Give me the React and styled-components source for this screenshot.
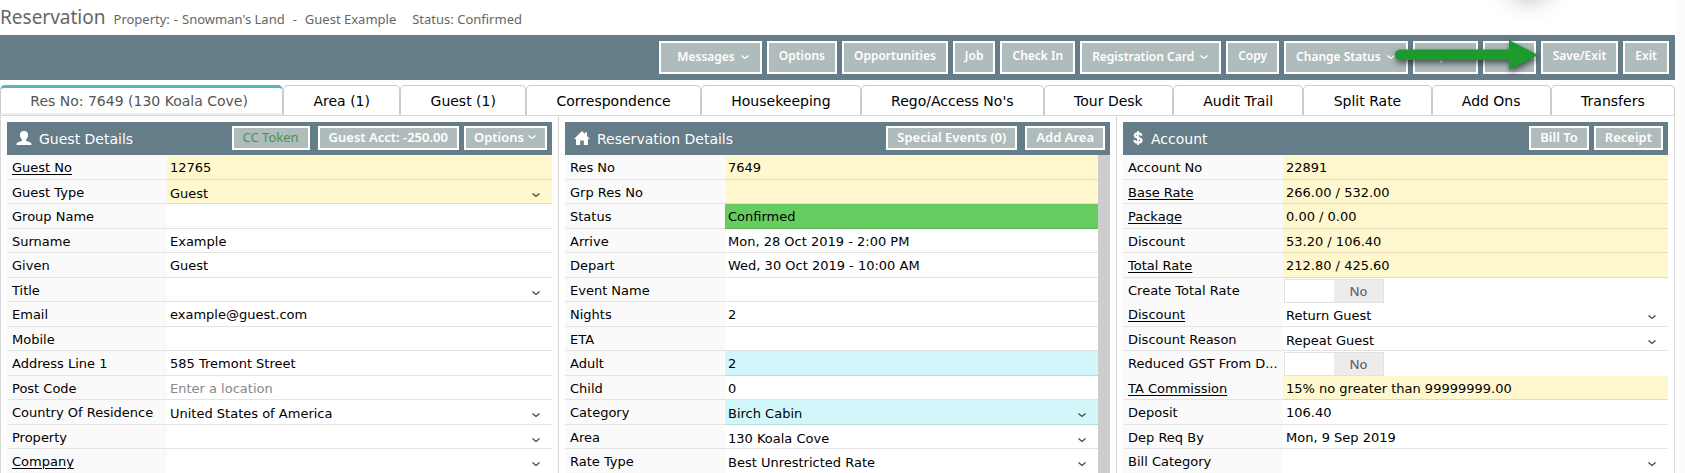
import React from 'react';
import styled, { createGlobalStyle, css } from 'styled-components';

const GlobalStyle = createGlobalStyle`
  * {
    box-sizing: border-box;
  }

  body {
    margin: 0;
    background: #fff;
    color: #000;
    font-family: 'DejaVu Sans', Verdana, sans-serif;
    font-size: 13px;
    overflow: hidden;
  }

  button,
  input,
  select {
    font: inherit;
    color: inherit;
  }
`;

const Page = styled.div`
  position: relative;
  padding-right: 10px;
  background: linear-gradient(to left, #fcfcfc 10px, #fff 10px);
`;

const TitleBar = styled.header`
  display: flex;
  align-items: baseline;
  height: 35px;
  padding-top: 5px;
  overflow: hidden;
  color: #666;
  font-family: 'Noto Sans', Tahoma, sans-serif;
  font-size: 13px;
  line-height: 24px;
`;

const Title = styled.h1`
  margin: 0 8px 0 0;
  font-size: 19px;
  font-weight: 400;
  line-height: 24px;
`;

const Crumb = styled.span`
  margin-right: ${props => props.$gap || 4}px;
`;

const Bubble = styled.div`
  position: absolute;
  top: -48px;
  right: 134px;
  width: 44px;
  height: 44px;
  border-radius: 50%;
  box-shadow: 0 4px 24px rgba(0, 0, 0, 0.3);
`;

const Toolbar = styled.nav`
  position: relative;
  display: flex;
  justify-content: flex-end;
  gap: 5px;
  height: 45px;
  padding: 6px 6px 6px 0;
  background: #657c89;
`;

const Button = styled.button`
  display: flex;
  align-items: center;
  justify-content: center;
  gap: 5px;
  height: 33px;
  padding: 0 10px ${props => (props.$menu ? 2 : 4)}px ${props => (props.$wide ? 16 : 10)}px;
  border: 2px solid #fff;
  background: #b0bcbc;
  color: #fff;
  font-family: 'Noto Sans', Tahoma, sans-serif;
  font-size: 12px;
  font-weight: 600;
  line-height: 18px;
  white-space: nowrap;
`;

const SmallButton = styled(Button)`
  gap: 3px;
  height: 24px;
  margin-right: ${props => (props.$apart ? 3 : 0)}px;
  padding: 0 ${props => (props.$menu ? 8 : 9)}px 2px;
  color: ${props => (props.$green ? '#4b9346' : '#fff')};
  font-size: 13px;
  font-weight: ${props => (props.$green ? 400 : 600)};
`;

const Arrow = styled.svg`
  position: absolute;
  top: 0;
  right: 134px;
  width: 150px;
  height: 45px;
  filter: drop-shadow(1px 3px 3px rgba(0, 0, 0, 0.6));
`;

const Tabs = styled.nav`
  display: flex;
  height: 31px;
  margin-top: 5px;
  border-bottom: 1px solid #d8d8d8;
`;

const Tab = styled.a`
  flex: 1 1 auto;
  border: 1px solid #ccc;
  border-bottom: 0;
  border-radius: 5px 5px 0 0;
  font-size: 14px;
  line-height: 30px;
  text-align: center;
  text-decoration: none;
  color: #000;

  ${props =>
    props.$active &&
    css`
      padding: 0 5px 0 0;
      border-top: 3px solid #5ab5bf;
      border-bottom: 2px solid #eee;
      line-height: 26px;
      color: #555;
    `}
`;

const Columns = styled.main`
  display: grid;
  grid-template-columns: repeat(3, 1fr);
  border-left: 1px solid #d8d8d8;
`;

const Column = styled.div`
  padding: 6px 6px 0;
  border-right: 1px solid #d8d8d8;
`;

const PanelHeader = styled.div`
  display: flex;
  align-items: center;
  gap: 5px;
  height: 33px;
  padding: 0 5px 1px 9px;
  background: #657c89;
  color: #fff;

  svg {
    flex: none;
  }
`;

const PanelTitle = styled.h2`
  flex: 1;
  margin: 0;
  padding: 1px 0 0 2px;
  font-size: 14px;
  font-weight: 400;
`;

const PanelBody = styled.div`
  ${props => props.$scroll && 'border-right: 12px solid #cdcdcd;'}
`;

const Row = styled.div`
  display: grid;
  grid-template-columns: 160px 1fr;
  height: 24px;
  line-height: 23px;

  &:nth-child(odd) {
    height: 25px;
  }
`;

const Label = styled.label`
  padding: 1px 3px 0 5px;
  border-bottom: 1px solid #e4e4e4;
  background: #fafafa;
  overflow: hidden;
  text-overflow: ellipsis;
  white-space: nowrap;

  a {
    color: #000;
    text-underline-offset: 2px;
  }
`;

const tones = {
  yellow: '#fff8cf',
  green: '#68cd61',
  cyan: '#d2f7fa',
};

const Value = styled.div`
  position: relative;
  display: flex;
  min-width: 0;
  border-bottom: 1px solid rgba(0, 0, 0, 0.11);
  background: ${props => tones[props.$tone] || '#fff'};

  > svg {
    position: absolute;
    right: 11px;
    top: 11px;
    pointer-events: none;
  }
`;

const control = css`
  width: 100%;
  height: 23px;
  margin: 0;
  padding: 2px 3px 0;
  border: 0;
  outline: 0;
  background: transparent;
`;

const TextBox = styled.input`
  ${control}

  &::placeholder {
    color: #888;
    opacity: 1;
  }
`;

const Select = styled.select`
  ${control}
  appearance: none;
`;

const Switch = styled.span`
  position: relative;
  z-index: 1;
  display: flex;
  width: 100px;
  height: 24px;
  margin: 1px 0 0 1px;
  border: 1px solid #e2e2e2;
  background: linear-gradient(to right, #fff 50%, #ececec 50%);

  input {
    flex: 1;
    width: 49px;
    margin: 0;
    appearance: none;
  }

  span {
    flex: 1;
    color: #666;
    font-family: 'Noto Sans', Tahoma, sans-serif;
    font-weight: 500;
    text-align: center;
  }
`;

const Chevron = ({ color = '#fff' }) => (
  <svg width="10" height="8" viewBox="0 0 10 8" fill="none" aria-hidden="true">
    <path d="M1.500 2.500 L5 5.500 L8.500 2.500" stroke={color} strokeWidth="1.300" />
  </svg>
);

const PersonIcon = () => (
  <svg width="16" height="16" viewBox="0 0 16 16" fill="#fff" aria-hidden="true">
    <path d="M8 1c2.700 0 4 1.500 4 4 0 1.900-.9 3.600-2 4.500v1.200l4 1.500c.9.400 1.500 1 1.500 2.800H.5c0-1.800.6-2.400 1.500-2.800l4-1.500V9.500C4.900 8.600 4 6.900 4 5c0-2.500 1.300-4 4-4z" />
  </svg>
);

const HomeIcon = () => (
  <svg width="16" height="16" viewBox="0 0 16 16" fill="#fff" aria-hidden="true">
    <path d="M8 1l3 3V2.200h2V6l3 3h-2v6H9.800v-4.500H6.200V15H2V9H0z" />
  </svg>
);

const DollarIcon = () => (
  <svg width="12" height="16" viewBox="0 0 12 16" fill="none" stroke="#fff" aria-hidden="true">
    <path d="M6 1v14" strokeWidth="1.800" />
    <path d="M9.300 5.600C9.100 4 8 3.400 6 3.400S2.900 4.200 2.900 5.600C2.900 8.500 9.500 7.300 9.500 10.300c0 1.600-1.500 2.300-3.500 2.300s-3.400-.7-3.600-2.500" strokeWidth="2.400" />
  </svg>
);

const toolbar = [
  { text: 'Messages', menu: true, wide: true },
  { text: 'Options' },
  { text: 'Opportunities' },
  { text: 'Job' },
  { text: 'Check In' },
  { text: 'Registration Card', menu: true },
  { text: 'Copy' },
  { text: 'Change Status', menu: true },
  { text: 'Repeat' },
  { text: 'Send' },
  { text: 'Save/Exit' },
  { text: 'Exit' },
];

const tabs = [
  'Res No: 7649 (130 Koala Cove)',
  'Area (1)',
  'Guest (1)',
  'Correspondence',
  'Housekeeping',
  "Rego/Access No's",
  'Tour Desk',
  'Audit Trail',
  'Split Rate',
  'Add Ons',
  'Transfers',
];

const panels = [
  {
    title: 'Guest Details',
    icon: <PersonIcon />,
    buttons: [
      { text: 'CC Token', green: true, apart: true },
      { text: 'Guest Acct: -250.00' },
      { text: 'Options', menu: true },
    ],
    rows: [
      { label: 'Guest No', link: true, value: '12765', tone: 'yellow' },
      { label: 'Guest Type', value: 'Guest', tone: 'yellow', type: 'select' },
      { label: 'Group Name' },
      { label: 'Surname', value: 'Example' },
      { label: 'Given', value: 'Guest' },
      { label: 'Title', type: 'select' },
      { label: 'Email', value: 'example@guest.com' },
      { label: 'Mobile' },
      { label: 'Address Line 1', value: '585 Tremont Street' },
      { label: 'Post Code', placeholder: 'Enter a location' },
      { label: 'Country Of Residence', value: 'United States of America', type: 'select' },
      { label: 'Property', type: 'select' },
      { label: 'Company', link: true, type: 'select' },
    ],
  },
  {
    title: 'Reservation Details',
    icon: <HomeIcon />,
    scroll: true,
    buttons: [{ text: 'Special Events (0)', apart: true }, { text: 'Add Area' }],
    rows: [
      { label: 'Res No', value: '7649', tone: 'yellow' },
      { label: 'Grp Res No', tone: 'yellow' },
      { label: 'Status', value: 'Confirmed', tone: 'green' },
      { label: 'Arrive', value: 'Mon, 28 Oct 2019 - 2:00 PM' },
      { label: 'Depart', value: 'Wed, 30 Oct 2019 - 10:00 AM' },
      { label: 'Event Name' },
      { label: 'Nights', value: '2' },
      { label: 'ETA' },
      { label: 'Adult', value: '2', tone: 'cyan' },
      { label: 'Child', value: '0' },
      { label: 'Category', value: 'Birch Cabin', tone: 'cyan', type: 'select' },
      { label: 'Area', value: '130 Koala Cove', type: 'select' },
      { label: 'Rate Type', value: 'Best Unrestricted Rate', type: 'select' },
    ],
  },
  {
    title: 'Account',
    icon: <DollarIcon />,
    buttons: [{ text: 'Bill To' }, { text: 'Receipt' }],
    rows: [
      { label: 'Account No', value: '22891', tone: 'yellow' },
      { label: 'Base Rate', link: true, value: '266.00 / 532.00', tone: 'yellow' },
      { label: 'Package', link: true, value: '0.00 / 0.00', tone: 'yellow' },
      { label: 'Discount', value: '53.20 / 106.40', tone: 'yellow' },
      { label: 'Total Rate', link: true, value: '212.80 / 425.60', tone: 'yellow' },
      { label: 'Create Total Rate', type: 'switch' },
      { label: 'Discount', link: true, value: 'Return Guest', type: 'select' },
      { label: 'Discount Reason', value: 'Repeat Guest', type: 'select' },
      { label: 'Reduced GST From D...', type: 'switch' },
      { label: 'TA Commission', link: true, value: '15% no greater than 99999999.00', tone: 'yellow' },
      { label: 'Deposit', value: '106.40' },
      { label: 'Dep Req By', value: 'Mon, 9 Sep 2019' },
      { label: 'Bill Category', type: 'select' },
    ],
  },
];

const Control = ({ id, type, value, placeholder }) => {
  if (type === 'select') {
    return (
      <>
        <Select id={id}>
          <option>{value || ''}</option>
        </Select>
        <Chevron color="#444" />
      </>
    );
  }
  if (type === 'switch') {
    return (
      <Switch>
        <input id={id} type="checkbox" />
        <span>No</span>
      </Switch>
    );
  }
  return <TextBox id={id} defaultValue={value} placeholder={placeholder} />;
};

const Field = ({ id, label, link, tone, ...rest }) => (
  <Row>
    <Label htmlFor={id}>{link ? <a href="#">{label}</a> : label}</Label>
    <Value $tone={tone}>
      <Control id={id} {...rest} />
    </Value>
  </Row>
);

const Panel = ({ title, icon, buttons, rows, scroll }) => (
  <Column>
    <PanelHeader>
      {icon}
      <PanelTitle>{title}</PanelTitle>
      {buttons.map(({ text, menu, green, apart }) => (
        <SmallButton key={text} type="button" $menu={menu} $green={green} $apart={apart}>
          {text}
          {menu && <Chevron />}
        </SmallButton>
      ))}
    </PanelHeader>
    <PanelBody $scroll={scroll}>
      {rows.map((row, i) => (
        <Field key={i} id={`${title}-${i}`.replace(' ', '-')} {...row} />
      ))}
    </PanelBody>
  </Column>
);

const App = () => (
  <>
    <GlobalStyle />
    <Page>
      <Bubble />
      <TitleBar>
        <Title>Reservation</Title>
        <Crumb $gap={4}>Property:</Crumb>
        <Crumb $gap={4}>-</Crumb>
        <Crumb $gap={8}>Snowman&apos;s Land</Crumb>
        <Crumb $gap={8}>-</Crumb>
        <Crumb $gap={16}>Guest Example</Crumb>
        <Crumb>Status: Confirmed</Crumb>
      </TitleBar>
      <Toolbar>
        {toolbar.map(({ text, menu, wide }) => (
          <Button key={text} type="button" $menu={menu} $wide={wide}>
            {text}
            {menu && <Chevron />}
          </Button>
        ))}
        <Arrow viewBox="0 0 150 45" aria-hidden="true">
          <path d="M9 14.500H118V5L147 20 118 35V25H9a5.200 5.200 0 0 1 0-10.500z" fill="#1c9b2d" />
        </Arrow>
      </Toolbar>
      <Tabs>
        {tabs.map((tab, i) => (
          <Tab key={tab} href="#" $active={i === 0}>
            {tab}
          </Tab>
        ))}
      </Tabs>
      <Columns>
        {panels.map(panel => (
          <Panel key={panel.title} {...panel} />
        ))}
      </Columns>
    </Page>
  </>
);

export default App;
